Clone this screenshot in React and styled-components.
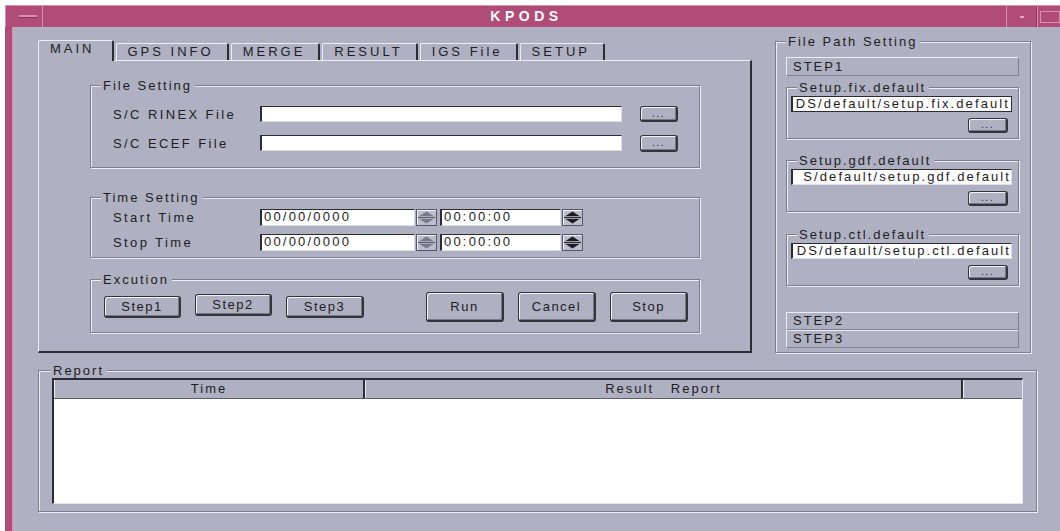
import styled, { createGlobalStyle } from "styled-components";

const GREY = "#afb1c3";
const PINK = "#b04c77";
const PINK_HI = "#d890ae";
const DARK = "#2c2c34";
const LIGHT = "#eceef6";
const SHADE = "#7d7f8f";

const GlobalStyle = createGlobalStyle`
  html, body { margin: 0; padding: 0; background: #fff; }
  body {
    font-family: "Liberation Sans", Arial, sans-serif;
    font-size: 13px;
    color: #1d1d22;
  }
  * { box-sizing: border-box; }
`;

const Screen = styled.div`
  width: 1060px;
  height: 531px;
  overflow: hidden;
  padding: 5px 0 0 5px;
`;

const Window = styled.div`
  width: 1062px;
  height: 530px;
  display: flex;
  flex-direction: column;
  background: ${PINK};
  border-top: 1px solid ${PINK_HI};
`;

const TitleBar = styled.div`
  display: flex;
  height: 21px;
  flex: none;
`;

const MenuBox = styled.div`
  width: 38px;
  display: flex;
  align-items: center;
  justify-content: center;
  border-left: 1px solid ${PINK_HI};
  border-right: 1px solid ${PINK_HI};
  padding-left: 7px;

  &::after {
    content: "";
    width: 18px;
    height: 2px;
    background: ${PINK_HI};
    border-bottom: 1px solid #8a2f57;
  }
`;

const Title = styled.div`
  flex: 1;
  text-align: center;
  color: #fff;
  font-weight: bold;
  font-size: 14px;
  letter-spacing: 4.5px;
  line-height: 21px;
  padding-left: 4px;
`;

const CornerBox = styled.div`
  width: ${(p) => p.$w}px;
  display: flex;
  align-items: center;
  justify-content: center;
  border-left: 1px solid ${PINK_HI};
  border-right: 1px solid #8a2f57;
`;

const Dot = styled.span`
  width: 4px;
  height: 2px;
  background: #e4a9c0;
`;

const MaxFrame = styled.span`
  width: 20px;
  height: 12px;
  border: 1px solid ${PINK_HI};
  margin-right: 4px;
`;

const Frame = styled.div`
  flex: 1;
  display: flex;
  border-left: 7px solid ${PINK};
  margin-bottom: 3px;
`;

const Body = styled.div`
  flex: 1;
  background: ${GREY};
  border-left: 1px solid ${PINK_HI};
  padding: 13px 0 0 25px;
`;

const TopRow = styled.div`
  display: flex;
  align-items: flex-start;
  gap: 23px;
`;

/* tab widget */

const TabWidget = styled.div`
  width: 714px;
`;

const TabBar = styled.div`
  display: flex;
  align-items: flex-end;
  gap: 2px;
  height: 20px;
  position: relative;
  z-index: 1;
`;

const Tab = styled.div`
  height: ${(p) => (p.$active ? 21 : 17)}px;
  margin-bottom: ${(p) => (p.$active ? -1 : 0)}px;
  padding: 0 ${(p) => (p.$active ? 17 : 13)}px 0 11px;
  background: ${GREY};
  border-top: 1px solid ${LIGHT};
  border-left: 1px solid ${LIGHT};
  border-right: 2px solid ${DARK};
  border-radius: 2px 2px 0 0;
  letter-spacing: 3px;
  line-height: ${(p) => (p.$active ? 16 : 15)}px;
  white-space: nowrap;
`;

const Panel = styled.div`
  height: 293px;
  border-top: 1px solid ${LIGHT};
  border-left: 1px solid ${LIGHT};
  border-right: 2px solid ${DARK};
  border-bottom: 2px solid ${DARK};
  padding: 24px 0 0 51px;
`;

/* etched group boxes */

const Group = styled.div`
  position: relative;
  width: ${(p) => (p.$w ? `${p.$w}px` : "auto")};
  height: ${(p) => (p.$h ? `${p.$h}px` : "auto")};
  margin-top: ${(p) => p.$mt || 0}px;
  border: 1px solid ${SHADE};
  box-shadow: inset 1px 1px 0 ${LIGHT}, 1px 1px 0 ${LIGHT};
  padding: ${(p) => p.$pad || "0"};
`;

const Legend = styled.span`
  position: absolute;
  top: -8px;
  left: ${(p) => p.$left ?? 10}px;
  padding: 0 3px 0 2px;
  background: ${GREY};
  line-height: 15px;
  letter-spacing: 2px;
  white-space: nowrap;
`;

const FieldRow = styled.div`
  display: flex;
  align-items: center;
  height: ${(p) => p.$h || 16}px;
  margin-top: ${(p) => p.$mt || 0}px;
`;

const Label = styled.span`
  width: 147px;
  margin-left: 22px;
  letter-spacing: 2.4px;
  white-space: nowrap;
`;

const Entry = styled.div`
  width: ${(p) => (p.$w ? `${p.$w}px` : "auto")};
  flex: ${(p) => (p.$w ? "none" : 1)};
  height: ${(p) => p.$h || 16}px;
  background: #fff;
  border-top: 1px solid ${DARK};
  border-left: 2px solid ${DARK};
  border-right: 1px solid #dcdee8;
  border-bottom: 1px solid #dcdee8;
  padding-left: 2px;
  letter-spacing: 2.2px;
  line-height: 14px;
  white-space: nowrap;
  overflow: hidden;
`;

const Button = styled.button`
  width: ${(p) => p.$w}px;
  height: ${(p) => p.$h}px;
  margin: ${(p) => p.$m || 0};
  flex: none;
  padding: 0;
  background: ${GREY};
  border: 1px solid #34343c;
  border-right-width: 2px;
  border-bottom-width: 2px;
  border-radius: 3px;
  box-shadow: inset 1px 1px 0 #f2f3f8, inset -1px -1px 0 #777989;
  font-family: "Liberation Sans", Arial, sans-serif;
  font-size: ${(p) => p.$fs || 13}px;
  letter-spacing: ${(p) => p.$ls ?? 1.5}px;
  color: #1d1d22;
  line-height: 1;
`;

const SpinField = styled.div`
  display: flex;
  width: ${(p) => p.$w}px;
  height: 17px;
  margin-right: ${(p) => p.$mr || 0}px;
`;

const SpinBox = styled.div`
  width: 21px;
  height: 17px;
  flex: none;
  margin-left: 1px;
  display: flex;
`;

const Spinner = ({ muted }) => {
  const ink = muted ? "#777a8c" : "#1c1c22";
  return (
    <SpinBox>
      <svg width="21" height="17" viewBox="0 0 21 17">
        <rect x="0.5" y="0.5" width="20" height="16" fill="#bcbecd" stroke="#55576a" />
        <path d="M1 1.5H20M1.5 1V16" stroke="#f1f2f8" />
        <path d="M3.5 7L10.5 2.5L17.5 7Z" fill={ink} />
        <path d="M2 8.5H19" stroke={muted ? "#5d5f70" : "#2a2a30"} strokeWidth="1.4" />
        <path d="M3.5 10L17.5 10L10.5 14.5Z" fill={ink} />
      </svg>
    </SpinBox>
  );
};

const ButtonRow = styled.div`
  display: flex;
  align-items: center;
  height: 52px;
  padding: 1px 11px 0 13px;
  gap: 14px;
`;

const Spacer = styled.div`
  flex: 1;
`;

const StepButton = styled(Button)`
  margin-bottom: ${(p) => (p.$lift ? 3 : 0)}px;
`;

/* file path panel */

const StepBar = styled.div`
  height: ${(p) => p.$h || 19}px;
  margin-top: ${(p) => p.$mt || 0}px;
  border-top: 1px solid ${LIGHT};
  border-left: 1px solid ${LIGHT};
  border-right: 1px solid ${SHADE};
  border-bottom: 1px solid ${SHADE};
  padding-left: 6px;
  letter-spacing: 2px;
  line-height: ${(p) => (p.$h || 19) - 2}px;
`;

const PathEntry = styled(Entry)`
  display: flex;
  justify-content: flex-end;
  margin: 0 6px 0 4px;
  border: 1px solid ${DARK};
  border-left-width: 2px;
  border-right-color: ${(p) => (p.$focus ? DARK : "#dcdee8")};
  border-bottom-color: ${(p) => (p.$focus ? DARK : "#dcdee8")};
  padding: 0 1px 0 0;
  letter-spacing: 2.1px;
`;

const Caret = styled.span`
  border-right: ${(p) => (p.$on ? `1px solid ${DARK}` : "none")};
  padding-right: 1px;
  margin-right: -2px;
`;

const BrowseRow = styled.div`
  display: flex;
  justify-content: flex-end;
  margin-top: 6px;
  padding-right: 10px;
`;

/* report table */

const Table = styled.div`
  height: 126px;
  display: flex;
  flex-direction: column;
  border-top: 2px solid ${DARK};
  border-left: 2px solid ${DARK};
  border-right: 1px solid #e4e6ee;
  border-bottom: 1px solid #e4e6ee;
`;

const HeadRow = styled.div`
  display: flex;
  height: 19px;
  flex: none;
  border-bottom: 1px solid #5b5d6c;
`;

const HeadCell = styled.div`
  width: ${(p) => (p.$w ? `${p.$w}px` : "auto")};
  flex: ${(p) => (p.$w ? "none" : 1)};
  border-left: 1px solid ${LIGHT};
  border-right: ${(p) => (p.$last ? "none" : `2px solid ${DARK}`)};
  text-align: center;
  line-height: 18px;
  letter-spacing: 2px;
  white-space: pre;
`;

const TableBody = styled.div`
  flex: 1;
  background: #fff;
`;

// the entries are scrolled to the end of the long path
const pathGroups = [
  { title: "Setup.fix.default", path: "DS/default/setup.fix.default", mt: 11, focus: true },
  { title: "Setup.gdf.default", path: "S/default/setup.gdf.default", mt: 21 },
  { title: "Setup.ctl.default", path: "DS/default/setup.ctl.default", mt: 22 },
];

const tabs = ["MAIN", "GPS INFO", "MERGE", "RESULT", "IGS File", "SETUP"];

export default function App() {
  return (
    <>
      <GlobalStyle />
      <Screen>
        <Window>
          <TitleBar>
            <MenuBox />
            <Title>KPODS</Title>
            <CornerBox $w={31}>
              <Dot />
            </CornerBox>
            <CornerBox $w={30}>
              <MaxFrame />
            </CornerBox>
          </TitleBar>

          <Frame>
            <Body>
              <TopRow>
                <TabWidget>
                  <TabBar>
                    {tabs.map((t, i) => (
                      <Tab key={t} $active={i === 0}>
                        {t}
                      </Tab>
                    ))}
                  </TabBar>
                  <Panel>
                    <Group $w={610} $h={83} $pad="20px 0 0 0">
                      <Legend>File Setting</Legend>
                      <FieldRow>
                        <Label>S/C RINEX File</Label>
                        <Entry $w={362} />
                        <Button $w={38} $h={16} $m="0 0 0 18px" $fs={10}>
                          ...
                        </Button>
                      </FieldRow>
                      <FieldRow $mt={13}>
                        <Label>S/C ECEF File</Label>
                        <Entry $w={362} />
                        <Button $w={38} $h={17} $m="0 0 0 18px" $fs={10}>
                          ...
                        </Button>
                      </FieldRow>
                    </Group>

                    <Group $w={610} $h={61} $mt={29} $pad="11px 0 0 0">
                      <Legend>Time Setting</Legend>
                      <FieldRow $h={17}>
                        <Label>Start Time</Label>
                        <SpinField $w={177} $mr={3}>
                          <Entry $h={17}>00/00/0000</Entry>
                          <Spinner muted />
                        </SpinField>
                        <SpinField $w={143}>
                          <Entry $h={17}>00:00:00</Entry>
                          <Spinner />
                        </SpinField>
                      </FieldRow>
                      <FieldRow $h={17} $mt={8}>
                        <Label>Stop Time</Label>
                        <SpinField $w={177} $mr={3}>
                          <Entry $h={17}>00/00/0000</Entry>
                          <Spinner muted />
                        </SpinField>
                        <SpinField $w={143}>
                          <Entry $h={17}>00:00:00</Entry>
                          <Spinner />
                        </SpinField>
                      </FieldRow>
                    </Group>

                    <Group $w={610} $h={54} $mt={21}>
                      <Legend>Excution</Legend>
                      <ButtonRow>
                        <StepButton $w={77} $h={22}>Step1</StepButton>
                        <StepButton $w={77} $h={22} $lift>Step2</StepButton>
                        <StepButton $w={78} $h={22}>Step3</StepButton>
                        <Spacer />
                        <Button $w={78} $h={30}>Run</Button>
                        <Button $w={78} $h={30}>Cancel</Button>
                        <Button $w={78} $h={30}>Stop</Button>
                      </ButtonRow>
                    </Group>
                  </Panel>
                </TabWidget>

                <Group $w={256} $h={312} $mt={1} $pad="15px 11px 0 10px">
                  <Legend>File Path Setting</Legend>
                  <StepBar>STEP1</StepBar>
                  {pathGroups.map((g) => (
                    <Group key={g.title} $h={52} $mt={g.mt} $pad="8px 0 0 0">
                      <Legend $left={10}>{g.title}</Legend>
                      <PathEntry $focus={g.focus}>
                        <Caret $on={g.focus}>{g.path}</Caret>
                      </PathEntry>
                      <BrowseRow>
                        <Button $w={40} $h={15} $fs={10}>
                          ...
                        </Button>
                      </BrowseRow>
                    </Group>
                  ))}
                  <StepBar $mt={26} $h={18}>STEP2</StepBar>
                  <StepBar $h={18}>STEP3</StepBar>
                </Group>
              </TopRow>

              <Group $w={999} $h={142} $mt={17} $pad="7px 13px 0 13px">
                <Legend $left={12}>Report</Legend>
                <Table>
                  <HeadRow>
                    <HeadCell $w={311}>Time</HeadCell>
                    <HeadCell $w={598}>{"Result   Report"}</HeadCell>
                    <HeadCell $last />
                  </HeadRow>
                  <TableBody />
                </Table>
              </Group>
            </Body>
          </Frame>
        </Window>
      </Screen>
    </>
  );
}
